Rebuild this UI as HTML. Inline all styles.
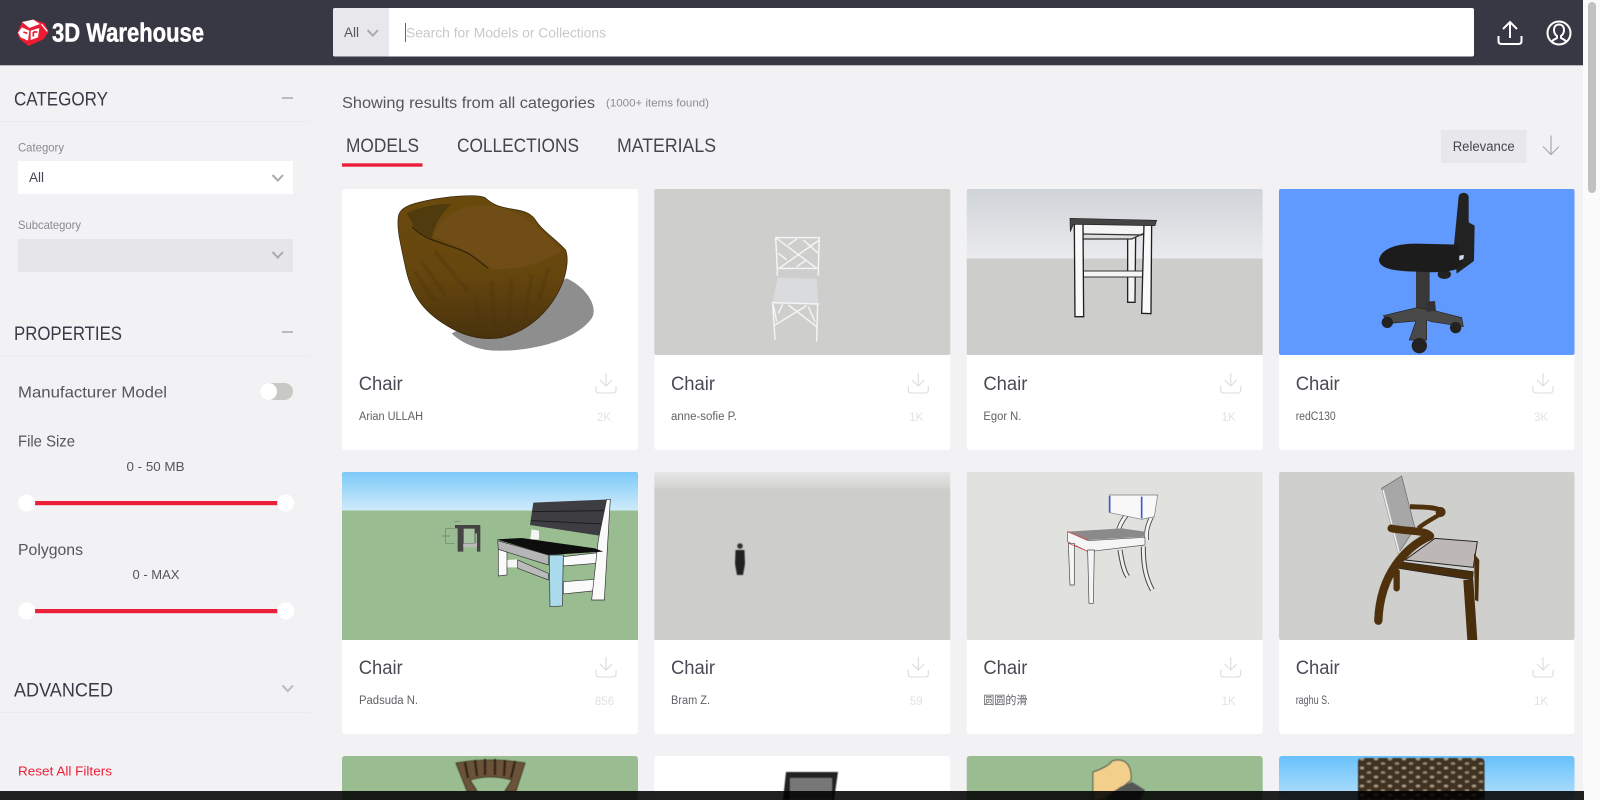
<!DOCTYPE html>
<html lang="en">
<head>
<meta charset="utf-8">
<title>3D Warehouse</title>
<style>
html,body{margin:0;padding:0;width:1600px;height:800px;overflow:hidden;background:#f2f2f5}
svg{display:block;position:absolute;left:0;top:0}
text{font-family:"Liberation Sans","Noto Sans CJK SC",sans-serif}
.h{font-size:19px;fill:#3a3a46}
.lb{font-size:12px;fill:#8a8a90}
.p{font-size:16px;fill:#55555c}
.r{font-size:13px;fill:#55555c}
.t{font-size:19px;fill:#4a4a55}
.a{font-size:11.5px;fill:#606066}
.c{font-size:11.5px;fill:#e2e2e6;text-anchor:middle}
.tab{font-size:19px;fill:#45454f}
</style>
</head>
<body>
<svg width="1600" height="800" viewBox="0 0 1600 800" xmlns="http://www.w3.org/2000/svg">
<defs>
<filter id="b" x="-5%" y="-5%" width="110%" height="110%"><feGaussianBlur stdDeviation="0.6"/></filter>
<linearGradient id="sky1" x1="0" y1="0" x2="0" y2="1"><stop offset="0" stop-color="#7cc9f9"/><stop offset="1" stop-color="#d2ecfa"/></linearGradient>
<linearGradient id="sky2" x1="0" y1="0" x2="0" y2="1"><stop offset="0" stop-color="#d0d3d7"/><stop offset="1" stop-color="#e9ebee"/></linearGradient>
<linearGradient id="sky3" x1="0" y1="0" x2="0" y2="1"><stop offset="0" stop-color="#e6e6e6"/><stop offset="1" stop-color="#d2d2d1"/></linearGradient>
<linearGradient id="sky4" x1="0" y1="0" x2="0" y2="1"><stop offset="0" stop-color="#68c1fb"/><stop offset="1" stop-color="#b4e0fb"/></linearGradient>
<linearGradient id="wood" x1="0" y1="0" x2="0" y2="1"><stop offset="0" stop-color="#6b4a10"/><stop offset=".55" stop-color="#65460f"/><stop offset="1" stop-color="#49320b"/></linearGradient>
<pattern id="roof" width="14" height="9" patternUnits="userSpaceOnUse"><rect width="14" height="9" fill="#3f3324"/><ellipse cx="4" cy="3" rx="2.200" ry="1.400" fill="#a89c80"/><ellipse cx="11" cy="7.500" rx="2.200" ry="1.300" fill="#958a70"/></pattern>
<symbol id="dl" overflow="visible"><path d="M0,0V13M-6,7L0,13L6,7M-10,13V17Q-10,20-7,20H7Q10,20 10,17V13" fill="none" stroke="#dcdce0" stroke-width="1.100"/></symbol>
</defs>

<!-- page -->
<rect width="1600" height="800" fill="#f2f2f5"/>

<!-- header -->
<rect x="0" y="0" width="1583" height="65" fill="#383845"/>
<rect x="0" y="65" width="1583" height="1" fill="#b9b9c0"/>
<g transform="scale(.3333)" filter="url(#b)">
<path d="M52,100L66,66L100,58L134,70L146,96L130,118L86,138L60,118Z" fill="#ee1c33"/>
<path d="M54,98L66,82L88,92L84,122L62,112Z" fill="#fff"/>
<path d="M66,66L100,59L120,72L88,84Z" fill="#fff"/>
<path d="M92,92L118,84L114,112L92,120Z" fill="#fff"/>
<path d="M100,96V110M100,96H112" stroke="#ee1c33" stroke-width="5" fill="none"/>
<path d="M124,72L142,94" stroke="#fff" stroke-width="4"/>
<path d="M70,96L82,100" stroke="#ee1c33" stroke-width="5"/>
</g>
<text x="52" y="41.500" font-size="25.500" font-weight="700" fill="#fff" stroke="#fff" stroke-width=".5" textLength="152" lengthAdjust="spacingAndGlyphs">3D Warehouse</text>

<rect x="333" y="8" width="1141" height="48.500" rx="2" fill="#fff"/>
<path d="M335,8H389V56.500H335Q333,56.500 333,54.500V10Q333,8 335,8Z" fill="#e8e8ec"/>
<text x="344" y="37" font-size="14" fill="#55555c" textLength="15" lengthAdjust="spacingAndGlyphs">All</text>
<path d="M367.500,30L372.800,35.500L378,30" fill="none" stroke="#aaaab0" stroke-width="2"/>
<rect x="405" y="23" width="1" height="19" fill="#666"/>
<text x="406" y="37.500" font-size="13.500" fill="#c8c8cc" textLength="200" lengthAdjust="spacingAndGlyphs">Search for Models or Collections</text>

<path d="M1510,22V38M1503,29L1510,22L1517,29M1498.500,36V41Q1498.500,44 1501.500,44H1518.500Q1521.500,44 1521.500,41V36" fill="none" stroke="#fff" stroke-width="2"/>
<circle cx="1559" cy="33" r="11.500" fill="none" stroke="#fff" stroke-width="2"/>
<path d="M1552,42c0-2.500 4-3 5-4v-2c-2-1.500-3-3.500-3-6c0-3.500 2-5.500 5-5.500s5,2 5,5.500c0,2.500-1,4.500-3,6v2c1,1 5,1.500 5,4" fill="none" stroke="#fff" stroke-width="2"/>

<!-- scrollbar -->
<rect x="1583" y="0" width="17" height="800" fill="#fafafa"/>
<rect x="1588" y="2" width="8" height="191" rx="4" fill="#c1c1c1"/>

<!-- sidebar -->
<text x="14" y="105.500" class="h" textLength="94" lengthAdjust="spacingAndGlyphs">CATEGORY</text>
<rect x="282" y="97" width="11" height="2" fill="#bcbcc0"/>
<rect x="0" y="121" width="311" height="1" fill="#ebebf0"/>
<text x="18" y="151.500" class="lb" textLength="46" lengthAdjust="spacingAndGlyphs">Category</text>
<rect x="18" y="161" width="275" height="33" fill="#fff"/>
<text x="29" y="182" font-size="13.500" fill="#45454f" textLength="15" lengthAdjust="spacingAndGlyphs">All</text>
<path d="M272.500,175L277.800,180.500L283,175" fill="none" stroke="#aaaab0" stroke-width="2"/>
<text x="18" y="229" class="lb" textLength="63" lengthAdjust="spacingAndGlyphs">Subcategory</text>
<rect x="18" y="239" width="275" height="33" fill="#e6e6ea"/>
<path d="M272.500,252L277.800,257.500L283,252" fill="none" stroke="#aaaab0" stroke-width="2"/>

<text x="14" y="340" class="h" textLength="108" lengthAdjust="spacingAndGlyphs">PROPERTIES</text>
<rect x="282" y="331" width="11" height="2" fill="#bcbcc0"/>
<rect x="0" y="355" width="311" height="1" fill="#ebebf0"/>
<text x="18" y="397.500" class="p" textLength="149" lengthAdjust="spacingAndGlyphs">Manufacturer Model</text>
<rect x="260" y="383" width="33" height="17" rx="8.500" fill="#c8c8c4"/>
<circle cx="268.500" cy="391.500" r="8.500" fill="#fff"/>
<text x="18" y="446.500" class="p" textLength="57" lengthAdjust="spacingAndGlyphs">File Size</text>
<text x="126.500" y="471" class="r" textLength="58" lengthAdjust="spacingAndGlyphs">0 - 50 MB</text>
<rect x="27" y="501" width="259" height="4.200" fill="#ec1f38"/>
<circle cx="26.700" cy="503" r="8.500" fill="#fff"/><circle cx="285.700" cy="503" r="8.500" fill="#fff"/>
<text x="18" y="555" class="p" textLength="65" lengthAdjust="spacingAndGlyphs">Polygons</text>
<text x="132.500" y="579" class="r" textLength="47" lengthAdjust="spacingAndGlyphs">0 - MAX</text>
<rect x="27" y="609" width="259" height="4.200" fill="#ec1f38"/>
<circle cx="26.700" cy="611" r="8.500" fill="#fff"/><circle cx="285.700" cy="611" r="8.500" fill="#fff"/>
<text x="14" y="696.500" class="h" textLength="99" lengthAdjust="spacingAndGlyphs">ADVANCED</text>
<path d="M282.500,685.500L287.800,691L293,685.500" fill="none" stroke="#bcbcc0" stroke-width="2"/>
<rect x="0" y="712" width="311" height="1" fill="#ebebf0"/>
<text x="18" y="775.500" font-size="13" fill="#ec1f38" textLength="94" lengthAdjust="spacingAndGlyphs">Reset All Filters</text>

<!-- results header -->
<text x="342" y="108" class="p" fill="#45454f" textLength="253" lengthAdjust="spacingAndGlyphs">Showing results from all categories</text>
<text x="606" y="106.500" font-size="11" fill="#8c8c92" textLength="103" lengthAdjust="spacingAndGlyphs">(1000+ items found)</text>
<text x="346" y="152" class="tab" textLength="73" lengthAdjust="spacingAndGlyphs">MODELS</text>
<text x="457" y="152" class="tab" textLength="122" lengthAdjust="spacingAndGlyphs">COLLECTIONS</text>
<text x="617" y="152" class="tab" textLength="99" lengthAdjust="spacingAndGlyphs">MATERIALS</text>
<rect x="342" y="163.300" width="80.500" height="3.400" fill="#ec1f38"/>
<rect x="1441" y="130" width="85.700" height="33" fill="#e8e8ec"/>
<text x="1452.700" y="151" font-size="13.500" fill="#45454f" textLength="62" lengthAdjust="spacingAndGlyphs">Relevance</text>
<path d="M1551,135.500V154.500M1543,146.500L1551,154.500L1559,146.500" fill="none" stroke="#aaaab0" stroke-width="1.200"/>

<!-- row 1 cards -->
<rect x="342" y="189" width="296" height="261" rx="3" fill="#fff"/>
<rect x="654.300" y="189" width="296" height="261" rx="3" fill="#fff"/>
<rect x="966.700" y="189" width="296" height="261" rx="3" fill="#fff"/>
<rect x="1279" y="189" width="295.500" height="261" rx="3" fill="#fff"/>
<!-- row 2 cards -->
<rect x="342" y="472" width="296" height="262" rx="3" fill="#fff"/>
<rect x="654.300" y="472" width="296" height="262" rx="3" fill="#fff"/>
<rect x="966.700" y="472" width="296" height="262" rx="3" fill="#fff"/>
<rect x="1279" y="472" width="295.500" height="262" rx="3" fill="#fff"/>
<!-- row 3 cards -->
<rect x="342" y="756" width="296" height="44" rx="3" fill="#99bd90"/>
<rect x="654.300" y="756" width="296" height="44" rx="3" fill="#fff"/>
<rect x="966.700" y="756" width="296" height="44" rx="3" fill="#99bd90"/>
<rect x="1279" y="756" width="295.500" height="44" rx="3" fill="url(#sky4)"/>

<!-- image 1: wooden armchair -->
<g transform="translate(335,185) scale(.3333)" filter="url(#b)">
<path d="M695,280C760,310 790,370 770,400C720,470 580,500 480,497C430,495 380,475 350,445Z" fill="#8e8e8e"/>
<path d="M190,95C195,65 230,55 300,42C360,32 430,28 450,38C475,60 490,65 530,72C570,78 590,85 605,110C625,140 660,160 692,195C702,220 695,265 680,300C650,370 590,435 500,458C440,468 380,453 320,412C260,372 225,322 210,240C195,170 185,130 190,95Z" fill="url(#wood)" stroke="#33240a" stroke-width="2"/>
<path d="M215,85C260,65 310,55 350,58C325,80 300,110 290,160C265,150 240,135 232,115Z" fill="#503a11"/>
<path d="M295,155C310,95 390,50 470,62C550,75 620,130 680,195C640,235 520,260 462,250C420,205 350,178 295,155Z" fill="#6f4e14"/>
<path d="M232,125C270,170 340,175 400,205C430,225 445,240 460,250" fill="none" stroke="#2e2008" stroke-width="3.500"/>
<path d="M260,230L330,330M300,200L400,320M240,260L300,350M470,290L480,440M530,280L520,430M590,270L570,400M640,250L610,350M420,330L440,440" stroke="#4d340a" stroke-width="12" opacity=".3"/>
</g>

<!-- image 2: white lattice chair -->
<rect x="654.300" y="189" width="296" height="166" rx="2" fill="#cecfcd"/>
<g transform="translate(640,185) scale(.3333)" filter="url(#b)">
<path d="M413,278L530,282L535,355L398,352Z" fill="#d9dbdd"/>
<path d="M407,158H538L535,250H412ZM412,250V272M535,250V272M410,160L530,250M538,165L420,248M445,180L470,162M415,205L440,225M490,165L535,205M470,245L500,225M396,353L537,357M398,355L405,465M533,357L530,470M405,420L500,362M445,360L530,425M415,385L428,358M505,365L525,410M400,360L410,410" fill="none" stroke="#f4f4f4" stroke-width="4.500"/>
</g>

<!-- image 3: stool -->
<rect x="966.700" y="189" width="296" height="70" rx="2" fill="url(#sky2)"/>
<rect x="966.700" y="258.500" width="296" height="96.500" fill="#cdcdcb"/>
<g transform="translate(945,185) scale(.3333)" filter="url(#b)">
<path d="M548,160L572,155L570,352H548Z" fill="#f3f3f3" stroke="#222" stroke-width="4"/>
<path d="M414,120L597,122V145L414,147Z" fill="#f5f5f5"/>
<path d="M414,147L590,150L597,145L560,162H414" fill="#ddd" stroke="#333" stroke-width="4"/>
<path d="M414,258H595V276H414Z" fill="#f5f5f5" stroke="#333" stroke-width="3"/>
<path d="M388,115H414L416,395H390Z" fill="#fafafa" stroke="#222" stroke-width="4"/>
<path d="M597,120H620L618,386L590,385Z" fill="#fafafa" stroke="#222" stroke-width="4"/>
<path d="M375,100L635,106L630,122L385,118L376,140Z" fill="#444" stroke="#222" stroke-width="2"/>
</g>

<!-- image 4: office chair -->
<rect x="1279" y="189" width="295.500" height="166" rx="2" fill="#619aff"/>
<g transform="translate(1250,185) scale(.3333)" filter="url(#b)">
<ellipse cx="583" cy="268" rx="20" ry="14" fill="#222"/>
<rect x="498" y="255" width="41" height="135" fill="#383838"/>
<path d="M400,392L500,368L545,375L635,398L640,425L545,410L530,405L530,465H478L498,408L420,415Z" fill="#4a4a4a" stroke="#222" stroke-width="2"/>
<path d="M530,350L555,348L558,378L530,380Z" fill="#333"/>
<circle cx="412" cy="412" r="17" fill="#222"/><circle cx="617" cy="428" r="17" fill="#222"/><circle cx="508" cy="482" r="23" fill="#222"/>
<path d="M626,35C628,20 654,20 656,35V112L674,122L672,228L620,266L612,180Z" fill="#222"/>
<path d="M387,225C392,192 440,175 500,176L625,179L640,240C620,262 560,264 500,260C440,258 390,254 387,225Z" fill="#1e1e1e"/>
<path d="M628,212L642,210L640,222L628,226Z" fill="#cfdcf5"/>
</g>

<!-- image 5: bench -->
<rect x="342" y="472" width="296" height="40" rx="2" fill="url(#sky1)"/>
<rect x="342" y="510.500" width="296" height="129.500" fill="#99bd90"/>
<g transform="translate(335,460) scale(.3333)" filter="url(#b)">
<path d="M360,195H436V275H426V220H385V275H368V205H360Z" fill="#444"/>
<rect x="385" y="205" width="35" height="45" fill="#a8c4a2" stroke="#444" stroke-width="2"/>
<path d="M385,250H426V262H385Z" fill="#bbb"/>
<path d="M332,205H358M332,205V250H358M322,228H345M358,185H375" stroke="#777" stroke-width="2" fill="none"/>
<path d="M595,128L825,118L800,228L585,195Z" fill="#3c3c42"/>
<path d="M592,155L815,152M588,182L805,192" stroke="#1d1d20" stroke-width="3"/>
<path d="M590,208L612,212V238H586Z" fill="#f5f5f5"/>
<path d="M516,300L548,298V322H516Z" fill="#f5f5f5"/>
<path d="M548,300L640,340V360L548,325Z" fill="#bbb" stroke="#333" stroke-width="2"/>
<path d="M685,290L790,278L785,310L685,318Z" fill="#fafafa" stroke="#333" stroke-width="2"/>
<path d="M685,365L780,358V392L685,402Z" fill="#fafafa" stroke="#333" stroke-width="2"/>
<path d="M815,118H826L808,420H770L790,240Z" fill="#fafafa" stroke="#333" stroke-width="2"/>
<path d="M490,265L516,275V345L490,348Z" fill="#fafafa" stroke="#333" stroke-width="2"/>
<path d="M488,242L640,285V315L490,268Z" fill="#b5b5b8" stroke="#333" stroke-width="2"/>
<path d="M485,238L560,234L780,265L805,275L640,285Z" fill="#111"/>
<path d="M643,285H685L682,438L645,440Z" fill="#aadcee" stroke="#333" stroke-width="2"/>
</g>

<!-- image 6: ground with figure -->
<rect x="654.300" y="472" width="296" height="17" rx="2" fill="url(#sky3)"/>
<rect x="654.300" y="488.500" width="296" height="151.500" fill="#cdcdcb"/>
<g filter="url(#b)">
<circle cx="740" cy="546" r="2.800" fill="#333"/>
<path d="M735.500,550H744.500L745,564L743,575H737L735,564Z" fill="#222"/>
</g>

<!-- image 7: klismos chair -->
<rect x="966.700" y="472" width="296" height="168" rx="2" fill="#e1e2dd"/>
<g transform="translate(945,460) scale(.3333)" filter="url(#b)">
<path d="M545,165C525,190 520,210 520,215M620,170C600,210 605,230 605,240" fill="none" stroke="#444" stroke-width="14"/>
<path d="M545,165C525,190 520,210 520,215M620,170C600,210 605,230 605,240" fill="none" stroke="#f2f2f2" stroke-width="9"/>
<path d="M525,270C530,300 535,330 548,350M595,260C595,310 600,350 622,390" fill="none" stroke="#444" stroke-width="15"/>
<path d="M525,270C530,300 535,330 548,350M595,260C595,310 600,350 622,390" fill="none" stroke="#eee" stroke-width="9"/>
<path d="M493,105H638L628,170L590,178L495,158Z" fill="#f8f8f8" stroke="#777" stroke-width="2"/>
<path d="M494,108V158M590,110V175" stroke="#4055d8" stroke-width="5"/>
<path d="M368,215L430,240L600,230V215L530,205Z" fill="#8a8a8a"/>
<path d="M368,215V245L430,275L600,255V232L430,242Z" fill="#f5f5f5" stroke="#555" stroke-width="2"/>
<path d="M370,250H388V375H375Z" fill="#f5f5f5" stroke="#444" stroke-width="2"/>
<path d="M428,270H448L445,430H432Z" fill="#f5f5f5" stroke="#444" stroke-width="2"/>
<path d="M370,215L430,240M372,250L425,273" stroke="#e85050" stroke-width="2.500"/>
</g>

<!-- image 8: wooden arm chair -->
<rect x="1279" y="472" width="295.500" height="168" rx="2" fill="#cfd0ce"/>
<g transform="translate(1250,460) scale(.3333)" filter="url(#b)">
<path d="M395,85L455,48L495,205L445,280Z" fill="#a7a7a7" stroke="#666" stroke-width="2"/>
<path d="M399,90L447,278" stroke="#eee" stroke-width="5"/>
<path d="M480,140C520,142 560,140 578,155" fill="none" stroke="#4f320b" stroke-width="15"/>
<path d="M578,158C560,170 520,190 505,205" fill="none" stroke="#4f320b" stroke-width="13"/>
<circle cx="572" cy="156" r="15" fill="#4f320b"/>
<path d="M555,235L682,245L670,322L465,300Z" fill="#bdb7b6" stroke="#222" stroke-width="3"/>
<path d="M440,335V385" stroke="#4f320b" stroke-width="19" stroke-linecap="round"/>
<path d="M450,305L670,335L668,360L445,325Z" fill="#4a2f0c" stroke="#222" stroke-width="2"/>
<path d="M672,280L688,300L685,425L675,420Z" fill="#4a2f0c"/>
<path d="M640,360H670L682,540H652Z" fill="#4a2f0c"/>
<path d="M540,228C470,260 390,340 385,482" fill="none" stroke="#4f320b" stroke-width="25" stroke-linecap="round"/>
<path d="M424,205C470,215 520,210 538,225" fill="none" stroke="#4f320b" stroke-width="23" stroke-linecap="round"/>
</g>

<!-- row 3 art -->
<g filter="url(#b)">
<path d="M456,763Q490,757 525,763L516,791H505L512,780Q490,774 470,780L477,791H467Z" fill="#6a5238" stroke="#33261a" stroke-width=".8"/>
<path d="M465,762L468,778M475,760L477,776M485,759V775M495,759V775M505,760L504,776M515,761L511,778" stroke="#2d2016" stroke-width="2.200"/>
<path d="M786,772H838L834,800H783Z" fill="#222"/>
<rect x="790" y="778" width="42" height="22" fill="#777"/>
<path d="M1093,772C1100,770 1110,765 1112,761C1125,757 1132,765 1131,780L1125,785L1100,800H1093Z" fill="#f2d08c" stroke="#444" stroke-width="1"/>
<path d="M1120,787L1132,782L1145,790L1140,800H1105Z" fill="#555"/>
<path d="M1358,762Q1358,758 1362,758H1480Q1484,758 1484.500,762V800H1358Z" fill="url(#roof)"/>
</g>

<!-- titles and meta -->
<text x="358.700" y="390" class="t" textLength="44" lengthAdjust="spacingAndGlyphs">Chair</text>
<text x="671" y="390" class="t" textLength="44" lengthAdjust="spacingAndGlyphs">Chair</text>
<text x="983.400" y="390" class="t" textLength="44" lengthAdjust="spacingAndGlyphs">Chair</text>
<text x="1295.700" y="390" class="t" textLength="44" lengthAdjust="spacingAndGlyphs">Chair</text>
<text x="359" y="420" class="a" textLength="64" lengthAdjust="spacingAndGlyphs">Arian ULLAH</text>
<text x="671" y="420" class="a" textLength="66" lengthAdjust="spacingAndGlyphs">anne-sofie P.</text>
<text x="983.400" y="420" class="a" textLength="38" lengthAdjust="spacingAndGlyphs">Egor N.</text>
<text x="1295.700" y="420" class="a" textLength="40" lengthAdjust="spacingAndGlyphs">redC130</text>
<text x="604" y="421" class="c">2K</text>
<text x="916.300" y="421" class="c">1K</text>
<text x="1228.700" y="421" class="c">1K</text>
<text x="1541" y="421" class="c">3K</text>
<use href="#dl" x="606" y="373"/>
<use href="#dl" x="918.300" y="373"/>
<use href="#dl" x="1230.700" y="373"/>
<use href="#dl" x="1543" y="373"/>

<text x="358.700" y="674" class="t" textLength="44" lengthAdjust="spacingAndGlyphs">Chair</text>
<text x="671" y="674" class="t" textLength="44" lengthAdjust="spacingAndGlyphs">Chair</text>
<text x="983.400" y="674" class="t" textLength="44" lengthAdjust="spacingAndGlyphs">Chair</text>
<text x="1295.700" y="674" class="t" textLength="44" lengthAdjust="spacingAndGlyphs">Chair</text>
<text x="359" y="704" class="a" textLength="59" lengthAdjust="spacingAndGlyphs">Padsuda N.</text>
<text x="671" y="704" class="a" textLength="39" lengthAdjust="spacingAndGlyphs">Bram Z.</text>
<text x="983.400" y="704" class="a" textLength="44" lengthAdjust="spacingAndGlyphs">圆圆的滑</text>
<text x="1295.700" y="704" class="a" textLength="34" lengthAdjust="spacingAndGlyphs">raghu S.</text>
<text x="604.500" y="705" class="c">856</text>
<text x="916.300" y="705" class="c">59</text>
<text x="1228.700" y="705" class="c">1K</text>
<text x="1541" y="705" class="c">1K</text>
<use href="#dl" x="606" y="657"/>
<use href="#dl" x="918.300" y="657"/>
<use href="#dl" x="1230.700" y="657"/>
<use href="#dl" x="1543" y="657"/>

<!-- bottom bar -->
<rect x="0" y="791" width="1584" height="9" fill="#000" fill-opacity=".87"/>
</svg>
</body>
</html>
